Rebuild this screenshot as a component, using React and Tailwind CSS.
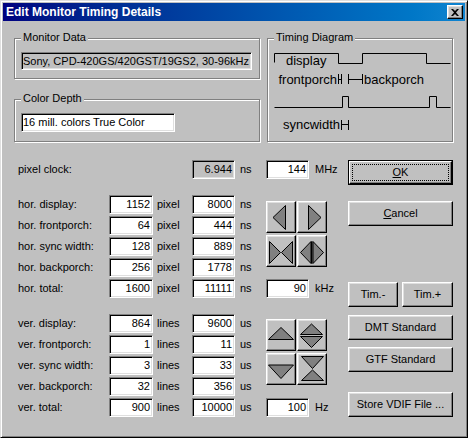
import React from "react";

const SUNKEN =
  "border border-t-[#808080] border-l-[#808080] border-b-white border-r-white shadow-[inset_1px_1px_0_#000,inset_-1px_-1px_0_#dfdfdf]";
const RAISED =
  "border border-t-white border-l-white border-b-black border-r-black shadow-[inset_-1px_-1px_0_#808080,inset_1px_1px_0_#dfdfdf]";
const ETCHED = "border border-[#808080] shadow-[inset_1px_1px_0_#fff,1px_1px_0_#fff]";

const hor = [
  ["hor. display:", "1152", "8000"],
  ["hor. frontporch:", "64", "444"],
  ["hor. sync width:", "128", "889"],
  ["hor. backporch:", "256", "1778"],
  ["hor. total:", "1600", "11111"],
];

const ver = [
  ["ver. display:", "864", "9600"],
  ["ver. frontporch:", "1", "11"],
  ["ver. sync width:", "3", "33"],
  ["ver. backporch:", "32", "356"],
  ["ver. total:", "900", "10000"],
];

function Field({ value, className = "w-[44px]", gray = false }) {
  return (
    <div
      className={`${SUNKEN} ${className} h-[19px] ${gray ? "bg-[#c0c0c0]" : "bg-white"} flex items-center justify-end pr-[2px] text-[11px]`}
    >
      {value}
    </div>
  );
}

function Group({ title, className, children }) {
  return (
    <div className={`relative ${ETCHED} ${className}`}>
      <span className="absolute left-[6px] top-[-8px] px-[2px] bg-[#c0c0c0] text-[11px] leading-[13px]">
        {title}
      </span>
      {children}
    </div>
  );
}

function Row({ label, a, unitA, b, unitB, grayB }) {
  return (
    <div className="grid grid-cols-[91px_44px_39px_43px_31px] h-[19px] items-center text-[11px]">
      <span>{label}</span>
      {a ? <Field value={a} /> : <span />}
      <span className="pl-[4px]">{unitA}</span>
      <Field value={b} className="w-[43px]" gray={grayB} />
      <span className="pl-[5px]">{unitB}</span>
    </div>
  );
}

function ArrowBtn({ children }) {
  return (
    <button className={`${RAISED} bg-[#c0c0c0] w-[30px] h-[32px] p-0 block`}>
      <svg width="28" height="30" className="block">
        <g transform="translate(-1 -1)" fill="#808080" stroke="#000" strokeWidth="1">
          {children}
        </g>
      </svg>
    </button>
  );
}

function Btn({ children, className = "w-[105px]" }) {
  return (
    <button
      className={`${RAISED} bg-[#c0c0c0] ${className} h-[25px] flex items-center justify-center text-[11px] text-black`}
    >
      {children}
    </button>
  );
}

function ValueUnit({ value, unit }) {
  return (
    <div className="flex items-center h-[19px] text-[11px]">
      <Field value={value} className="w-[43px]" />
      <span className="ml-[6px]">{unit}</span>
    </div>
  );
}

function TimingDiagram() {
  const txt = { fontFamily: "'Liberation Sans', Arial, sans-serif", fontSize: 13, fill: "#000" };
  return (
    <svg width="184" height="102" className="absolute left-0 top-0">
      <g fill="none" stroke="#000" strokeWidth="1">
        <polyline points="6.5,23.5 6.5,14.5 70.5,14.5 70.5,24.5 94.5,24.5 94.5,14.5 158.5,14.5 158.5,24.5 182.5,24.5" />
        <polyline points="6.5,68.5 74.5,68.5 74.5,57.5 80.5,57.5 80.5,68.5 161.5,68.5 161.5,57.5 168.5,57.5 168.5,68.5 182.5,68.5" />
        <path d="M70.5 35v10M73.5 35v10M70.5 40.5h3" />
        <path d="M80.5 35v10M94.5 35v10M80.5 40.5h14" />
        <path d="M73.5 81v10M80.5 81v10M73.5 85.5h7" />
      </g>
      <text x="18" y="26" style={txt}>display</text>
      <text x="69" y="45" textAnchor="end" style={txt}>frontporch</text>
      <text x="96" y="45" style={txt}>backporch</text>
      <text x="72" y="90" textAnchor="end" style={txt}>syncwidth</text>
    </svg>
  );
}

export default function App() {
  return (
    <div className="w-[468px] h-[438px] bg-[#c0c0c0] border border-t-[#dfdfdf] border-l-[#dfdfdf] border-b-black border-r-black shadow-[inset_1px_1px_0_#fff,inset_-1px_-1px_0_#808080] p-[2px] font-['Liberation_Sans',Arial,sans-serif] text-black select-none">
      {/* title bar */}
      <div className="h-[18px] bg-linear-to-r from-[#000080] to-[#1084d0] flex items-center justify-between pl-[3px] pr-[2px]">
        <span className="text-white font-bold text-[12px] leading-none">Edit Monitor Timing Details</span>
        <button className={`${RAISED} bg-[#c0c0c0] w-[16px] h-[14px] flex items-center justify-center p-0`}>
          <svg width="8" height="7" viewBox="0 0 8 7">
            <path d="M0 0h2l2 2 2-2h2L5 3.5 8 7H6L4 5 2 7H0l3-3.5z" fill="#000" />
          </svg>
        </button>
      </div>

      {/* top groups */}
      <div className="pt-[17px] pl-[11px] flex">
        <div className="w-[246px] flex flex-col">
          <Group title="Monitor Data" className="h-[41px] pt-[13px] pl-[6px]">
            <div className={`${SUNKEN} w-[231px] h-[18px] bg-[#c0c0c0] flex items-center pl-[1px] text-[11px] whitespace-nowrap`}>
              Sony, CPD-420GS/420GST/19GS2, 30-96kHz
            </div>
          </Group>
          <Group title="Color Depth" className="mt-[20px] h-[43px] pt-[13px] pl-[6px]">
            <div className={`${SUNKEN} w-[154px] h-[19px] bg-white flex items-center pl-[1px] text-[11px] whitespace-nowrap`}>
              16 mill. colors True Color
            </div>
          </Group>
        </div>
        <Group title="Timing Diagram" className="ml-[7px] w-[186px] h-[104px]">
          <TimingDiagram />
        </Group>
      </div>

      {/* timing values */}
      <div className="mt-[18px] pl-[15px] flex">
        <div className="w-[248px] flex flex-col">
          <Row label="pixel clock:" b="6.944" unitB="ns" grayB />
          <div className="mt-[16px] flex flex-col gap-[2px]">
            {hor.map(([l, a, b]) => (
              <Row key={l} label={l} a={a} unitA="pixel" b={b} unitB="ns" />
            ))}
          </div>
          <div className="mt-[16px] flex flex-col gap-[2px]">
            {ver.map(([l, a, b]) => (
              <Row key={l} label={l} a={a} unitA="lines" b={b} unitB="us" />
            ))}
          </div>
        </div>

        <div className="w-[82px] flex flex-col">
          <ValueUnit value="144" unit="MHz" />
          <div className="mt-[22px] grid grid-cols-[30px_30px] gap-x-[1px] gap-y-[2px]">
            <ArrowBtn>
              <polygon points="7,16.5 19.5,4.5 19.5,28.5" />
            </ArrowBtn>
            <ArrowBtn>
              <polygon points="11.5,4.5 11.5,28.5 24,16.5" />
            </ArrowBtn>
            <ArrowBtn>
              <polygon points="3.5,6.5 3.5,28.5 14.5,17.5" />
              <polygon points="26.5,6.5 26.5,28.5 15.5,17.5" />
            </ArrowBtn>
            <ArrowBtn>
              <polygon points="3.5,17.5 14,6.5 14,28.5" />
              <rect x="14" y="6.5" width="1.5" height="22" fill="#000" stroke="none" />
              <polygon points="16,6.5 16,28.5 26.5,17.5" />
            </ArrowBtn>
          </div>
          <div className="mt-[12px]">
            <ValueUnit value="90" unit="kHz" />
          </div>
          <div className="mt-[21px] grid grid-cols-[30px_30px] gap-x-[1px] gap-y-[2px]">
            <ArrowBtn>
              <polygon points="2.5,20.5 27.5,20.5 15,8.5" />
            </ArrowBtn>
            <ArrowBtn>
              <polygon points="3.5,15.5 25.5,15.5 14.5,5" />
              <polygon points="3.5,17.5 25.5,17.5 14.5,28.5" />
            </ArrowBtn>
            <ArrowBtn>
              <polygon points="2.5,12 27.5,12 15,25.5" />
            </ArrowBtn>
            <ArrowBtn>
              <polygon points="4.5,3.5 26.5,3.5 15.5,15.5" />
              <polygon points="15.5,17 4.5,27.5 26.5,27.5" />
            </ArrowBtn>
          </div>
          <div className="mt-[13px]">
            <ValueUnit value="100" unit="Hz" />
          </div>
        </div>

        <div className="w-[105px] flex flex-col">
          <div className="border border-black w-[105px] h-[25px]">
            <button className="w-full h-full border border-t-white border-l-white border-b-black border-r-black shadow-[inset_-1px_-1px_0_#808080] bg-[#c0c0c0] p-[2px] block">
              <div className="w-full h-full border border-dotted border-black flex items-center justify-center text-[11px]">
                <span>
                  <span className="underline">O</span>K
                </span>
              </div>
            </button>
          </div>
          <div className="mt-[16px]">
            <Btn>
              <span>
                <span className="underline">C</span>ancel
              </span>
            </Btn>
          </div>
          <div className="mt-[56px] flex gap-[4px]">
            <Btn className="w-[50px]">Tim.-</Btn>
            <Btn className="w-[51px]">Tim.+</Btn>
          </div>
          <div className="mt-[8px]">
            <Btn>DMT Standard</Btn>
          </div>
          <div className="mt-[7px]">
            <Btn>GTF Standard</Btn>
          </div>
          <div className="mt-[20px]">
            <Btn>Store VDIF File ...</Btn>
          </div>
        </div>
      </div>
    </div>
  );
}
